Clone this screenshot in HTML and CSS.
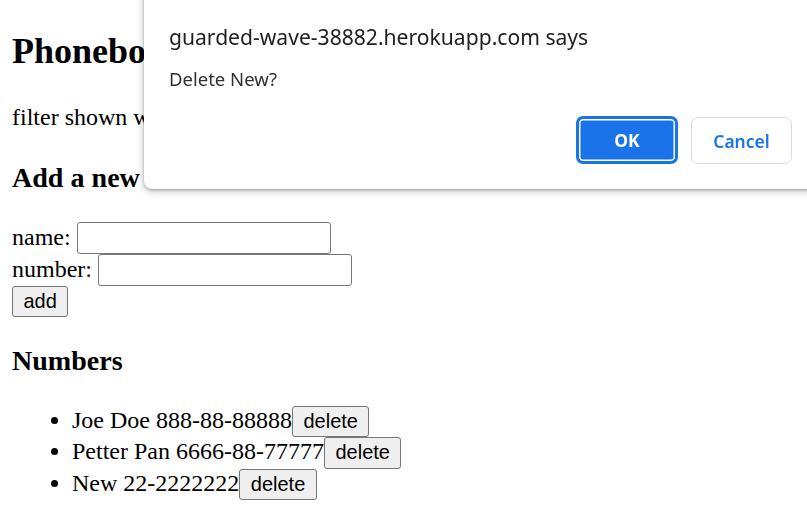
FILE: index.html
```html
<!DOCTYPE html>
<html>
<head>
<meta charset="utf-8">
<link rel="stylesheet" href="styles.css">
</head>
<body>
<main class="page">
  <h2>Phonebook</h2>
  <div>filter shown with <input class="field"></div>
  <h3>Add a new</h3>
  <form>
    <div>name: <input class="field"></div>
    <div>number: <input class="field"></div>
    <div><button type="button" class="btn">add</button></div>
  </form>
  <h3>Numbers</h3>
  <ul>
    <li>Joe Doe 888-88-88888<button type="button" class="btn">delete</button></li>
    <li>Petter Pan 6666-88-77777<button type="button" class="btn">delete</button></li>
    <li>New 22-2222222<button type="button" class="btn">delete</button></li>
  </ul>
</main>
<div class="dialog">
  <div class="dialog-title">guarded-wave-38882.herokuapp.com says</div>
  <div class="dialog-msg">Delete New?</div>
  <div class="dialog-actions">
    <button type="button" class="dbtn ok">OK</button>
    <button type="button" class="dbtn cancel">Cancel</button>
  </div>
</div>
</body>
</html>
```
FILE: styles.css
```css
html, body {
  margin: 0;
  background: #fff;
}
.page {
  zoom: 1.5;
  margin: 8px;
  font-family: "Liberation Serif", "Times New Roman", serif;
  font-size: 16px;
  color: #000;
}
.field {
  font-family: "Liberation Sans", Arial, sans-serif;
  font-size: 13.33px;
  border: 1px solid #767676;
  border-radius: 2px;
  padding: 1px 2px;
  width: 164px;
  height: 18px;
  box-sizing: content-box;
}
.btn {
  font-family: "Liberation Sans", Arial, sans-serif;
  font-size: 13.33px;
  line-height: 15.67px;
  color: #000;
  background: #efefef;
  border: 1px solid #767676;
  border-radius: 2px;
  padding: 2px 7px;
}
.dialog {
  position: fixed;
  top: -10px;
  left: 144px;
  width: 680px;
  height: 199px;
  background: #fff;
  border-radius: 8px;
  box-shadow: 0 1px 3px rgba(0,0,0,0.3), 0 2px 6px 2px rgba(0,0,0,0.15);
  font-family: "Noto Sans", "Segoe UI", sans-serif;
  color: #202124;
  box-sizing: border-box;
  padding: 33px 0 0 25px;
}
.dialog-title {
  font-size: 21.1px;
  line-height: 28px;
}
.dialog-msg {
  margin-top: 16px;
  font-size: 18.5px;
  line-height: 24px;
  color: #303134;
}
.dialog-actions {
  display: flex;
  gap: 13px;
  margin-top: 25px;
  padding-left: 407px;
}
.dbtn {
  font-family: "Noto Sans", "Segoe UI", sans-serif;
  font-size: 17.5px;
  height: 48px;
  width: 102px;
  border-radius: 7px;
  box-sizing: border-box;
}
.ok {
  background: #1a73e8;
  color: #fff;
  font-weight: 700;
  border: 3px solid #1a73e8;
  box-shadow: inset 0 0 0 1.5px #fff;
}
.cancel {
  margin-top: 1px;
  height: 47px;
  width: 101px;
  background: #fff;
  color: #1a73e8;
  font-weight: 600;
  border: 1px solid #dadce0;
}
```
